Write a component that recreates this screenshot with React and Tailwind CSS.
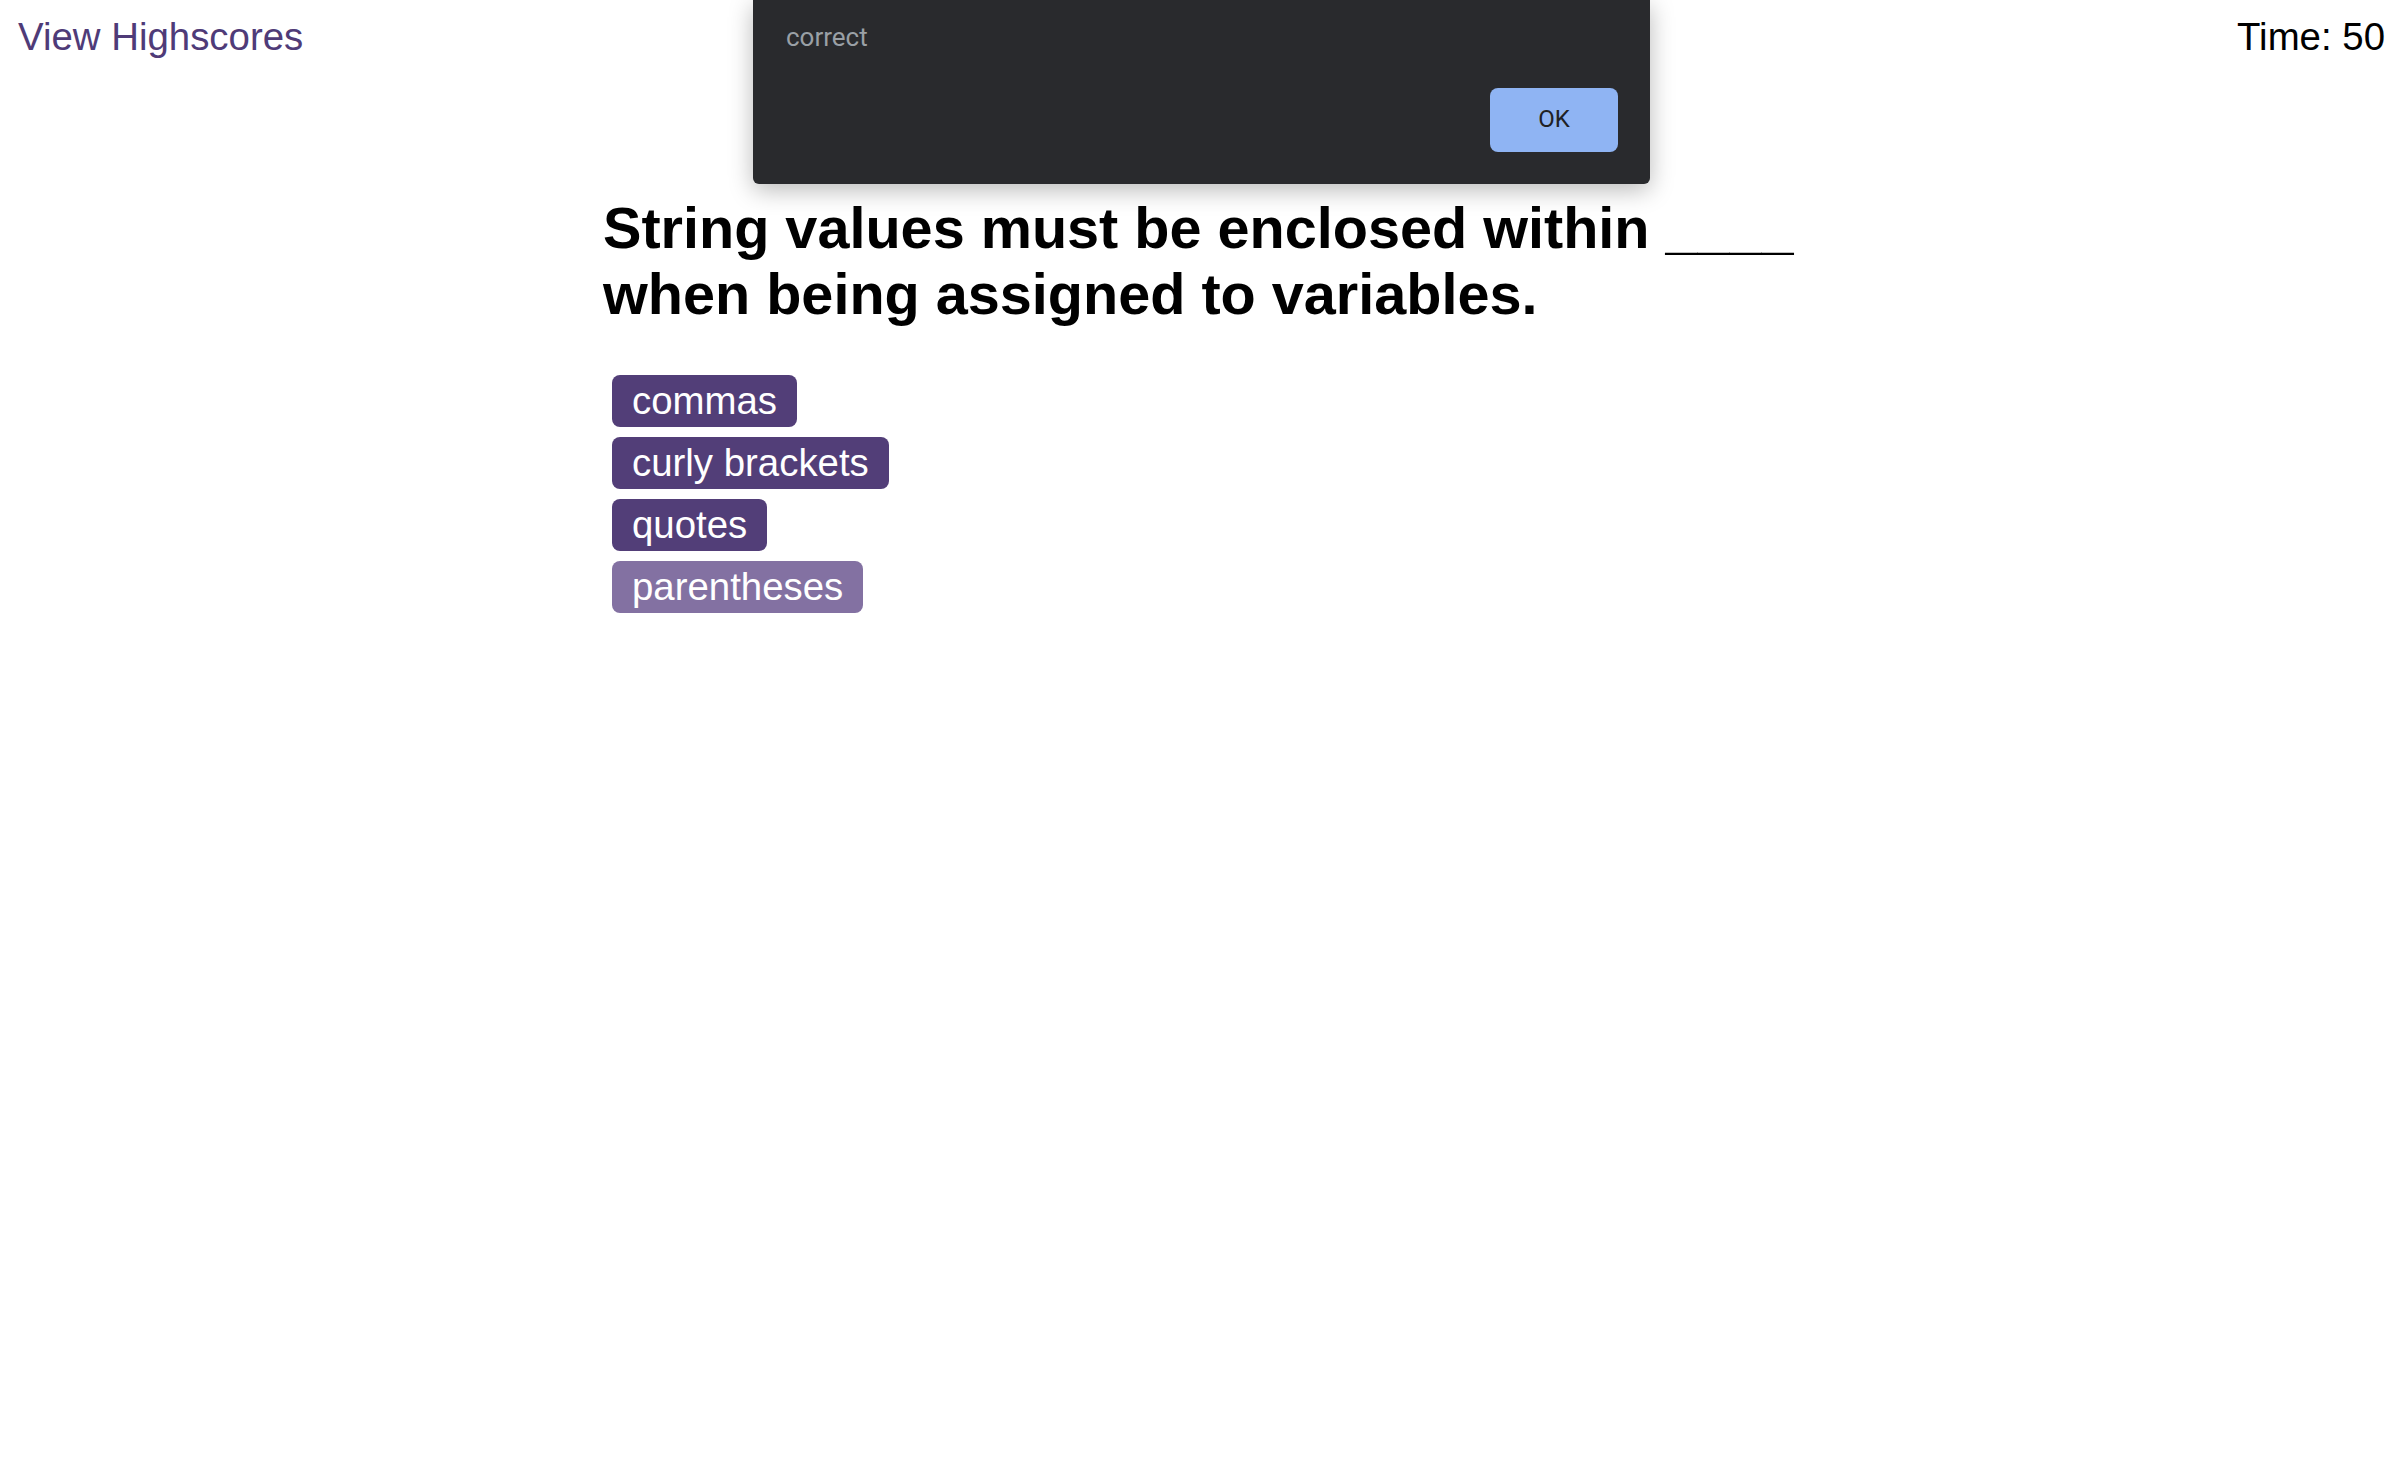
import React from 'react'

const answers = [
  { label: 'commas', active: false },
  { label: 'curly brackets', active: false },
  { label: 'quotes', active: false },
  { label: 'parentheses', active: true },
]

function App() {
  return (
    <div className="relative min-h-screen bg-white text-black font-['Liberation_Sans',Arial,sans-serif] text-[38.4px] leading-[1.15]">
      {/* Top bar */}
      <header className="flex justify-between pl-[18px] pr-[17px] pt-[15px]">
        <a href="#" className="text-[#4f3b78]">View Highscores</a>
        <span>Time: 50</span>
      </header>

      {/* Quiz */}
      <main className="mx-auto w-[1200px] mt-[136px]">
        <h1 className="pl-[2px] text-[57.6px] font-bold leading-[1.15]">
          String values must be enclosed within ____ when being assigned to variables.
        </h1>
        <div className="mt-[47px] pl-[11px] flex flex-col items-start gap-[10px]">
          {answers.map(a => (
            <button
              key={a.label}
              className={
                'px-[20px] py-1 rounded-[8px] text-white leading-[1.15] ' +
                (a.active ? 'bg-[#8371a2]' : 'bg-[#523e78]')
              }
            >
              {a.label}
            </button>
          ))}
        </div>
      </main>

      {/* Browser alert */}
      <div className="absolute top-0 left-[753px] w-[897px] h-[184px] bg-[#292a2d] rounded-b-[6px] shadow-[0_6px_24px_rgba(0,0,0,0.28)] flex flex-col pt-[22px] pl-[33px] pr-[32px] font-['Roboto',sans-serif]">
        <p className="text-[26px] leading-[30px] text-[#9aa0a6]">correct</p>
        <button className="self-end mt-[36px] w-[128px] h-[64px] rounded-[8px] bg-[#8fb4f3] text-[#202124] text-[24px]">
          OK
        </button>
      </div>
    </div>
  )
}

export default App
